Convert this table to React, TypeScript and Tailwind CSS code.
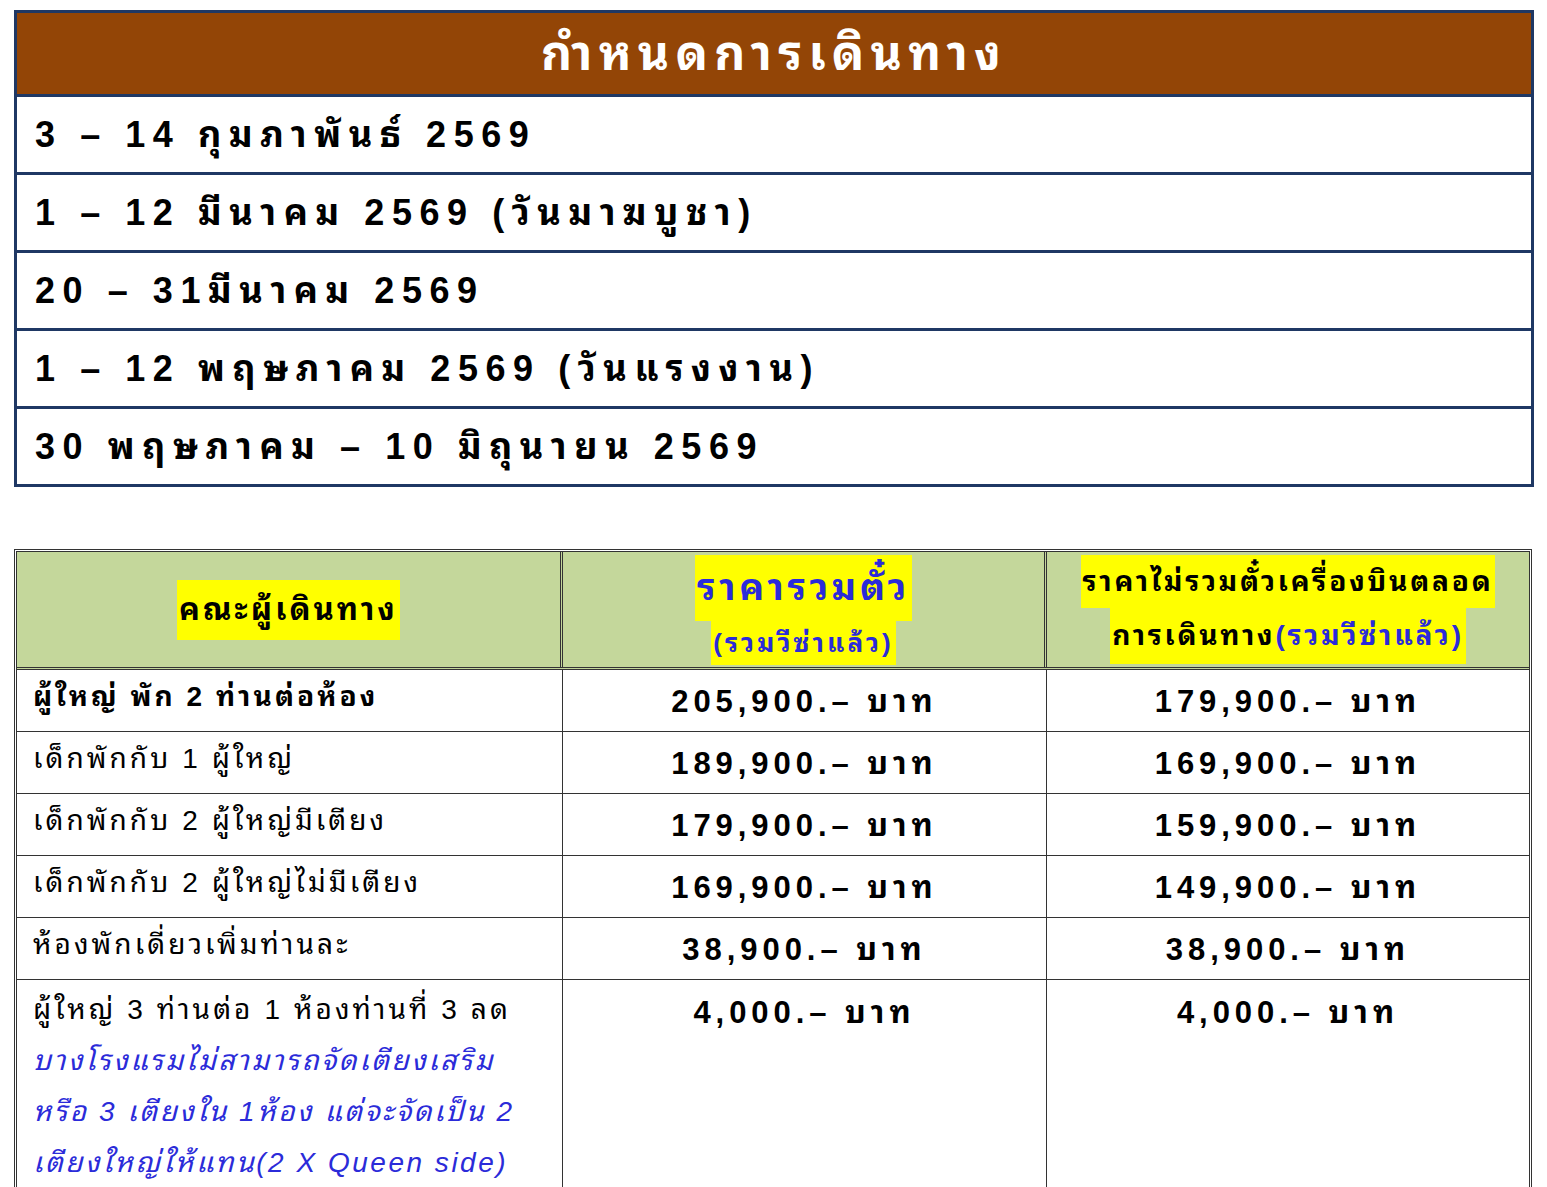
import React from 'react'

const dates = [
  '3 – 14 กุมภาพันธ์ 2569',
  '1 – 12 มีนาคม 2569 (วันมาฆบูชา)',
  '20 – 31มีนาคม 2569',
  '1 – 12 พฤษภาคม 2569 (วันแรงงาน)',
  '30 พฤษภาคม – 10 มิถุนายน 2569',
]

const prices = [
  { label: 'ผู้ใหญ่ พัก 2 ท่านต่อห้อง', bold: true, a: '205,900.– บาท', b: '179,900.– บาท' },
  { label: 'เด็กพักกับ 1 ผู้ใหญ่', a: '189,900.– บาท', b: '169,900.– บาท' },
  { label: 'เด็กพักกับ 2 ผู้ใหญ่มีเตียง', a: '179,900.– บาท', b: '159,900.– บาท' },
  { label: 'เด็กพักกับ 2 ผู้ใหญ่ไม่มีเตียง', a: '169,900.– บาท', b: '149,900.– บาท' },
  { label: 'ห้องพักเดี่ยวเพิ่มท่านละ', a: '38,900.– บาท', b: '38,900.– บาท' },
]

const font = 'font-["Liberation_Sans","Noto_Sans_Thai_Looped","Loma","Tlwg_Typist","Noto_Sans_Thai",sans-serif]'

export default function App() {
  return (
    <div className={`bg-white w-[1547px] h-[1187px] overflow-hidden ${font} text-black`}>
      <div className="pt-[10px] pl-[14px]">
        {/* ตารางกำหนดการ */}
        <div className="w-[1520px] border-[3px] border-[#1f3864]">
          <div className="h-[81px] bg-[#934506] flex items-center justify-center">
            <span className="text-white text-[48px] font-bold tracking-[0.13em]">กำหนดการเดินทาง</span>
          </div>
          {dates.map(d => (
            <div key={d} className="h-[78px] border-t-[3px] border-[#1f3864] flex items-center pl-[18px]">
              <span className="text-[36px] font-bold tracking-[0.21em]">{d}</span>
            </div>
          ))}
        </div>

        {/* ตารางราคา */}
        <div className="mt-[62px] w-[1518px] border-[3px] border-double border-[#333]">
          <div className="grid grid-cols-[546px_484px_1fr] bg-[#c4d79b] h-[118px] border-b-[3px] border-double border-[#333]">
            <div className="flex items-center justify-center border-r-[3px] border-double border-[#333]">
              <span className="bg-[#ffff00] text-[31px] font-bold leading-[60px] tracking-[0.1em] px-[2px]">คณะผู้เดินทาง</span>
            </div>
            <div className="flex flex-col items-center justify-center border-r-[3px] border-double border-[#333]">
              <span className="bg-[#ffff00] text-[#2b2bd9] text-[37px] font-bold leading-[66px] tracking-[0.1em] px-[2px]">ราคารวมตั๋ว</span>
              <span className="bg-[#ffff00] text-[#2b2bd9] text-[26px] font-bold leading-[44px] tracking-[0.12em] px-[2px]">(รวมวีซ่าแล้ว)</span>
            </div>
            <div className="flex flex-col items-center justify-center">
              <span className="bg-[#ffff00] text-[28px] font-bold leading-[53px] tracking-[0.1em] px-[2px]">ราคาไม่รวมตั๋วเครื่องบินตลอด</span>
              <span className="bg-[#ffff00] text-[28px] font-bold leading-[56px] tracking-[0.1em] px-[2px]">
                การเดินทาง<span className="text-[#2b2bd9]">(รวมวีซ่าแล้ว)</span>
              </span>
            </div>
          </div>

          {prices.map(p => (
            <div key={p.label} className="grid grid-cols-[546px_484px_1fr] h-[62px] border-b border-[#333]">
              <div className={`border-r border-[#333] pl-[16px] pt-[6px] text-[28px] tracking-[0.11em] ${p.bold ? 'font-bold' : ''}`}>
                {p.label}
              </div>
              <div className="border-r border-[#333] flex items-center justify-center pt-[4px] text-[31px] font-bold tracking-[0.16em]">
                {p.a}
              </div>
              <div className="flex items-center justify-center pt-[4px] text-[31px] font-bold tracking-[0.16em]">{p.b}</div>
            </div>
          ))}

          <div className="grid grid-cols-[546px_484px_1fr] h-[260px]">
            <div className="border-r border-[#333] pl-[16px] pt-[4px] text-[28px] leading-[51px] tracking-[0.11em]">
              <div>ผู้ใหญ่ 3 ท่านต่อ 1 ห้องท่านที่ 3 ลด</div>
              <div className="text-[#2b2bd9] italic tracking-[0.09em]">บางโรงแรมไม่สามารถจัดเตียงเสริม</div>
              <div className="text-[#2b2bd9] italic tracking-[0.09em]">หรือ 3 เตียงใน 1ห้อง แต่จะจัดเป็น 2</div>
              <div className="text-[#2b2bd9] italic tracking-[0.09em]">เตียงใหญ่ให้แทน(2 X Queen side)</div>
            </div>
            <div className="border-r border-[#333] flex justify-center pt-[10px] text-[31px] font-bold tracking-[0.16em]">
              4,000.– บาท
            </div>
            <div className="flex justify-center pt-[10px] text-[31px] font-bold tracking-[0.16em]">4,000.– บาท</div>
          </div>
        </div>
      </div>
    </div>
  )
}
